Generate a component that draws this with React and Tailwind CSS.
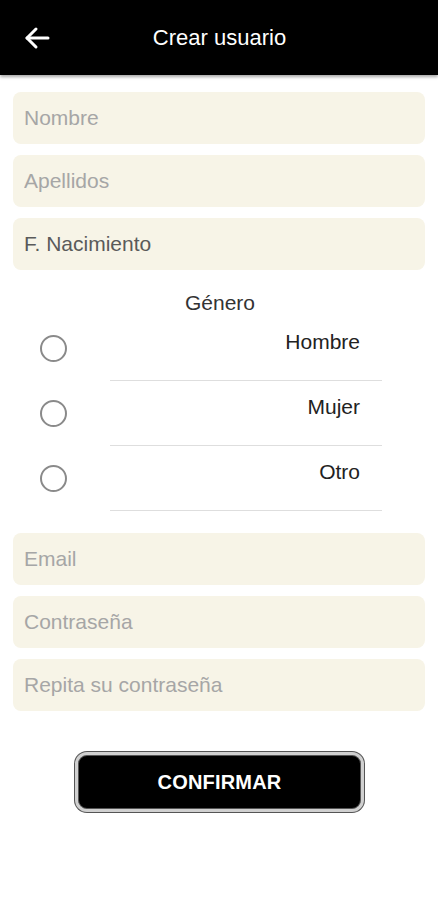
import React, { useState } from "react";

const font = { fontFamily: '"Liberation Sans", Arial, sans-serif' };

function Field({ placeholder, value }) {
  return (
    <input
      type="text"
      placeholder={placeholder}
      defaultValue={value}
      className="w-full h-[52px] rounded-lg bg-[#f7f4e7] px-[11px] text-[21px] text-[#5a5a5a] placeholder:text-[#a6a6a6] outline-none"
    />
  );
}

export default function App() {
  const [genero, setGenero] = useState("");
  const opciones = ["Hombre", "Mujer", "Otro"];

  return (
    <div className="min-h-[900px] bg-white" style={font}>
      <div className="relative h-[75px] bg-black flex items-center justify-center shadow-[0_2px_3px_rgba(0,0,0,0.35)]">
        <button className="absolute left-[24px] top-[26px] text-white">
          <svg width="26" height="24" viewBox="0 0 26 24" fill="none" stroke="white" strokeWidth="3" strokeLinecap="round" strokeLinejoin="round">
            <path d="M24 12H3" />
            <path d="M12 3L3 12l9 9" />
          </svg>
        </button>
        <h1 className="text-white text-[22px] -mt-[1px] pl-[1px]">Crear usuario</h1>
      </div>

      <div className="px-[13px] pt-[17px] flex flex-col gap-[11px]">
        <Field placeholder="Nombre" />
        <Field placeholder="Apellidos" />
        <Field placeholder="F. Nacimiento" value="F. Nacimiento" />
      </div>

      <div className="pt-[22px]">
        <p className="text-center text-[21px] text-[#333] leading-none pl-[2px]">Género</p>
        <div className="mt-[3px]">
          {opciones.map((o) => (
            <label key={o} className="flex items-start h-[65px] cursor-pointer">
              <span className="w-[110px] shrink-0 pt-[19px] pl-[40px]">
                <input
                  type="radio"
                  name="genero"
                  checked={genero === o}
                  onChange={() => setGenero(o)}
                  className="block appearance-none w-[27px] h-[27px] rounded-full border-2 border-[#8a8a8a] checked:border-[8px] checked:border-black"
                />
              </span>
              <span className="w-[272px] h-[65px] border-b border-[#dedede] flex justify-end pr-[22px] pt-[10px] text-[21px] text-[#222]">
                {o}
              </span>
            </label>
          ))}
        </div>
      </div>

      <div className="px-[13px] pt-[22px] flex flex-col gap-[11px]">
        <Field placeholder="Email" />
        <Field placeholder="Contraseña" />
        <Field placeholder="Repita su contraseña" />
      </div>

      <div className="flex justify-center pt-[41px] pl-[1px]">
        <button className="w-[289px] h-[60px] rounded-[12px] bg-black border-[3px] border-[#d0d0d0] shadow-[0_0_0_1px_#555,inset_0_0_0_1px_#555] text-white font-bold text-[20px] tracking-[0.2px]">
          CONFIRMAR
        </button>
      </div>
    </div>
  );
}
